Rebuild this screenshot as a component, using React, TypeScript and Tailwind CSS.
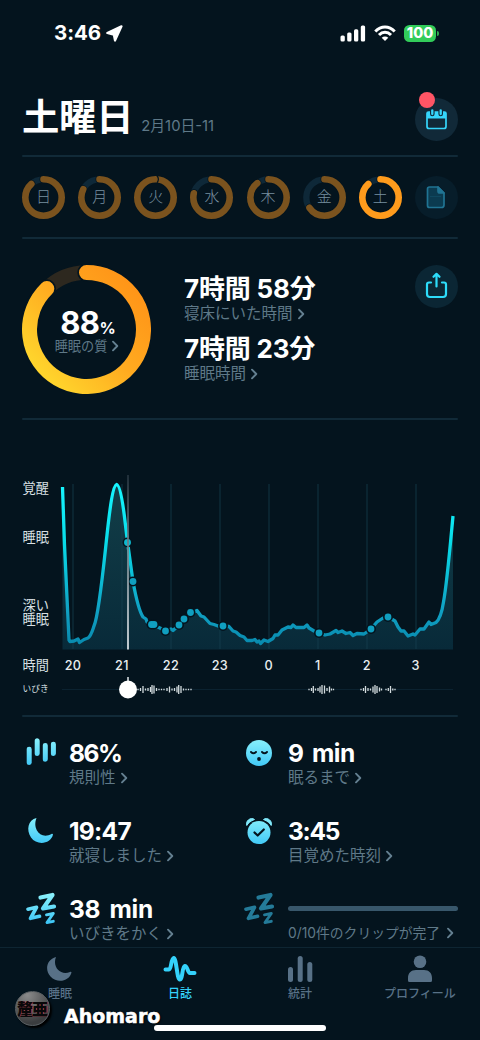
import type { ReactNode } from "react";

const DAYS = [
  { d: "日", deg: 316 },
  { d: "月", deg: 295 },
  { d: "火", deg: 359 },
  { d: "水", deg: 282 },
  { d: "木", deg: 320 },
  { d: "金", deg: 234 },
  { d: "土", deg: 316 },
];

const HOURS = ["20", "21", "22", "23", "0", "1", "2", "3"];

const CURVE =
  "M62.5 487L64.5 545L69 640L70 641.5L74 641L78 639L79.5 642.5L84 639.5L88 638C91 636 92 632 94 626C99 615 104 562 107 535C110 507 113 485.500 116.500 484.500C120 484.500 123 505 124.500 517L127.500 542L133 581.500C136 598 139 611 143 617L146 619L147 622L152 624.500L160 628L165.500 631L171 629L173 630.500L179 625L184 619L190.500 612.500L194 612L197 610.500L201 616L204 617L210 623.500L214 624.500L218 626L223 626L229 626.500L233 631L236 632L240 635.500L244 637L247 640.500L252 640.500L255 639.500L257 642L259 641L260.500 643.500L264 640L268 641.500L273 638.500L275 635L278 635L282 630L288 627L291 627.500L293 625L296 627.500L304 627.500L307 625L309 628L314 631L319 633L325 635L330 634L336 630.500L338 632.500L342 631L346 633.500L350 632.500L353 635.500L357 633.500L364 634L371 629L377 622L383 618L388 617L395 621L398 627L401 631L404 631L408 636L413 634L415 635L420 629L424 629L429 622L431 624.500L436 622.500C440 619 442 612 443.500 602C447 583 450 548 453 516";

const DOTS: [number, number][] = [
  [133, 581.5], [151.5, 624.5], [154, 624.5], [165.5, 631], [179, 625], [184, 619],
  [190.5, 612.5], [223, 626], [319, 633], [371, 629], [388, 617],
];

const WAVES: [number, number][] = [
  [138, 1.5], [140.5, 3], [143, 7], [145.500, 2], [148, 3], [150.500, 5], [152, 9], [154, 8], [156.500, 3],
  [159, 1.5], [161.500, 1.5], [164, 1.5], [167, 3], [169.500, 6], [172, 2], [174.500, 3], [177, 6], [178.700, 9], [181, 7],
  [183.500, 2], [186, 1.5], [188.500, 1.5], [191, 1.5],
  [309, 1.5], [311.500, 3], [313.300, 7], [315.500, 2], [318, 3], [320, 6], [322, 9], [324.500, 8], [327, 3], [329.500, 6], [331.500, 2], [333.500, 1.5],
  [361, 1.5], [363.500, 3], [365.500, 7], [368, 3], [370.500, 2], [373, 6], [375, 9], [377, 7], [379.500, 4], [381.500, 2],
  [386, 1.5], [388.300, 3], [390.500, 7], [392.800, 2], [395, 1.5],
];

function Chevron({ className = "" }: { className?: string }) {
  return (
    <svg width="8" height="12" viewBox="0 0 8 12" fill="none" stroke="#648091" strokeWidth="1.9" strokeLinecap="round" strokeLinejoin="round" className={"shrink-0 " + className}>
      <path d="M2 1.700L6.300 6L2 10.300" />
    </svg>
  );
}

function Divider() {
  return <div className="h-[2px] shrink-0 rounded-full bg-[#112a38]" />;
}

function DayRing({ d, deg, active }: { d: string; deg: number; active: boolean }) {
  const c = 2 * Math.PI * 18.2;
  return (
    <div className="grid size-[43px] place-items-center">
      <svg viewBox="0 0 43 43" className="col-start-1 row-start-1 size-[43px]" fill="none">
        <circle cx="21.5" cy="21.5" r="18.200" stroke="#0e2838" strokeWidth="6.300" />
        <g strokeLinecap="round" strokeDasharray={`${(c * deg) / 360} ${c}`} transform="rotate(-90 21.5 21.5)">
          <circle cx="21.5" cy="21.5" r="18.200" stroke="#04141e" strokeWidth="8" />
          <circle cx="21.5" cy="21.5" r="18.200" stroke={active ? "#ff9b1c" : "#7b531e"} strokeWidth="6.600" />
        </g>
        {deg > 350 && <path d="M23 -0.200Q25.800 3.200 23 6.800" stroke="#04141e" strokeWidth="1.200" />}
      </svg>
      <span className="z-10 col-start-1 row-start-1 -mt-[2px] text-[15px] leading-none font-light text-[#7890a0]">{d}</span>
    </div>
  );
}

function Zs({ fill }: { fill: string }) {
  return (
    <svg width="34" height="34" viewBox="0 0 34 34" fill="none" stroke={fill} strokeLinecap="round" strokeLinejoin="round">
      <path strokeWidth="4.200" d="M17.500 5.500L29.500 3L20 16.500L31 14.500" />
      <path strokeWidth="3.700" d="M5 17.200L13.500 15.300L7.500 26.300L16.500 24.300" />
      <path strokeWidth="2.900" d="M23.500 22.800L30.300 21.500L24 30.500L30.300 29.300" />
    </svg>
  );
}

function Stat({ icon, value, label, spacing }: { icon: ReactNode; value: string; label: string; spacing: string }) {
  return (
    <div className="flex h-[78px]">
      <div className="flex w-[47px] shrink-0">{icon}</div>
      <div className="flex flex-col whitespace-nowrap">
        <div className={"h-[27px] text-[24.5px] leading-[27px] font-bold text-white " + spacing}>{value}</div>
        <div className="flex h-[22px] items-center gap-[4px] text-[15.5px] leading-[22px] text-[#5f7988]">
          {label}
          <Chevron />
        </div>
      </div>
    </div>
  );
}

function Chart() {
  return (
    <svg width="480" height="244" viewBox="0 470 480 244" className="-ml-[22px] block">
      <defs>
        <linearGradient id="line" gradientUnits="userSpaceOnUse" x1="0" y1="484" x2="0" y2="645">
          <stop offset="0" stopColor="#17f5ff" />
          <stop offset="0.350" stopColor="#08ddea" />
          <stop offset="0.800" stopColor="#109fc2" />
          <stop offset="1" stopColor="#088aae" />
        </linearGradient>
        <linearGradient id="area" gradientUnits="userSpaceOnUse" x1="0" y1="484" x2="0" y2="650">
          <stop offset="0" stopColor="#123e48" />
          <stop offset="1" stopColor="#082a39" />
        </linearGradient>
        <linearGradient id="cursor" gradientUnits="userSpaceOnUse" x1="0" y1="475" x2="0" y2="650">
          <stop offset="0" stopColor="#24333e" />
          <stop offset="0.500" stopColor="#829199" />
          <stop offset="1" stopColor="#e3e9ec" />
        </linearGradient>
      </defs>
      <path d={CURVE + "L453 649.500H62.500Z"} fill="url(#area)" />
      <g stroke="#16404f" strokeOpacity="0.500" strokeWidth="1.500">
        {HOURS.map((h, i) => (
          <path key={h} d={`M${73 + i * 49} 484V649`} />
        ))}
      </g>
      <path d={CURVE} fill="none" stroke="url(#line)" strokeWidth="3.300" strokeLinejoin="round" />
      <circle cx="127.500" cy="542.500" r="4.200" fill="#0db8ce" stroke="#04141e" strokeWidth="1.500" />
      {DOTS.map(([x, y]) => (
        <circle key={x} cx={x} cy={y} r="5" fill="#04141e" />
      ))}
      {DOTS.map(([x, y]) => (
        <circle key={x} cx={x} cy={y} r="3.400" fill="#109fc0" />
      ))}
      <path d="M128 475V649.500" stroke="url(#cursor)" strokeWidth="1.700" />
      <g fill="#d9e0e4" fontSize="13.200">
        <text x="22.500" y="493">覚醒</text>
        <text x="22.500" y="542">睡眠</text>
        <text x="22.500" y="610">
          深い
          <tspan x="22.500" dy="13.700">睡眠</tspan>
        </text>
        <text x="22.500" y="669.500">時間</text>
        <text x="22.500" y="692" fontSize="8.700">いびき</text>
      </g>
      <g fill="#e9eef0" fontSize="12.700" fontWeight="500" textAnchor="middle" letterSpacing="0.300">
        {HOURS.map((h, i) => (
          <text key={h} x={73 + i * 48.950} y="669.500">{h}</text>
        ))}
      </g>
      <path d="M62 689.500H453" stroke="#0b2230" />
      <path d="M128 677V685" stroke="#e3e9ec" strokeWidth="1.500" />
      <circle cx="128" cy="689.500" r="9" fill="#fff" />
      <g stroke="#d4dcdf" strokeWidth="1.300">
        {WAVES.map(([x, h]) => (
          <path key={x} d={`M${x} ${689.500 - h / 2}v${h}`} />
        ))}
      </g>
    </svg>
  );
}

function BigRing() {
  return (
    <div className="grid size-[130px] place-items-center">
      <svg viewBox="0 0 130 130" className="col-start-1 row-start-1 size-[130px]" fill="none">
        <defs>
          <linearGradient id="gold" x1="0.800" y1="0" x2="0" y2="0.750">
            <stop offset="0" stopColor="#ff9518" />
            <stop offset="0.500" stopColor="#ffab20" />
            <stop offset="1" stopColor="#ffd42c" />
          </linearGradient>
        </defs>
        <circle cx="65.500" cy="65.500" r="57" stroke="#2d281f" strokeWidth="14.500" />
        <path d="M65.500 8.500A57 57 0 1 1 25.800 24.600" stroke="#04141e" strokeWidth="18.500" strokeLinecap="round" />
        <path d="M65.500 8.500A57 57 0 1 1 25.800 24.600" stroke="url(#gold)" strokeWidth="15" strokeLinecap="round" />
      </svg>
      <div className="z-10 col-start-1 row-start-1 flex flex-col items-center pt-[6px]">
        <div className="flex h-[28px] items-baseline pl-[4px] leading-[26px] font-bold text-white">
          <span className="text-[31px] tracking-[-0.600px]">88</span>
          <span className="text-[16px]">%</span>
        </div>
        <div className="flex h-[17px] items-center gap-[4px] pl-[2px] text-[13.2px] leading-[17px] whitespace-nowrap text-[#5f7988]">
          睡眠の質
          <Chevron />
        </div>
      </div>
    </div>
  );
}

function Duration({ h, m, label }: { h: string; m: string; label: string }) {
  return (
    <div className="h-[60px] whitespace-nowrap">
      <div className="h-[30px] text-[26px] leading-[30px] font-bold tracking-[-0.200px] text-white">
        {h}時間 {m}分
      </div>
      <div className="flex h-[20px] items-center gap-[4px] text-[15.5px] leading-[20px] text-[#5f7988]">
        {label}
        <Chevron />
      </div>
    </div>
  );
}

function Tab({ label, active, children }: { label: string; active?: boolean; children: ReactNode }) {
  return (
    <div className={"flex flex-1 flex-col items-center pt-[5px] " + (active ? "text-[#34d2fb]" : "text-[#587187]")}>
      <svg width="36" height="30" viewBox="0 0 36 30" fill="currentColor">{children}</svg>
      <span className="mt-[2px] text-[12px] leading-[18px] font-medium whitespace-nowrap">{label}</span>
    </div>
  );
}

export default function App() {
  return (
    <main className="relative h-[1040px] w-[480px] overflow-hidden bg-[#04141e] font-[Inter,'Noto_Sans_CJK_JP',sans-serif]">
      <svg className="absolute size-0">
        <defs>
          <linearGradient id="ice" gradientUnits="userSpaceOnUse" x1="0" y1="2" x2="0" y2="31">
            <stop offset="0" stopColor="#8af1fc" />
            <stop offset="1" stopColor="#3dc6f6" />
          </linearGradient>
        </defs>
      </svg>

      <div className="flex h-[66px] items-center justify-between pr-[41px] pl-[54px]">
        <div className="flex items-center gap-[5px] text-[20.5px] font-bold tracking-[-0.100px] text-white">
          3:46
          <svg width="17" height="17" viewBox="0 0 17 17" fill="#fff" stroke="#fff" strokeWidth="2.200" strokeLinejoin="round">
            <path d="M1.300 8L15.500 1.300L9 15.500L7.800 9.600Z" />
          </svg>
        </div>
        <div className="flex items-center">
          <svg width="26" height="17" viewBox="0 0 26 17" fill="#fff">
            <rect x="0.500" y="10.500" width="4.300" height="6" rx="1.500" />
            <rect x="7.200" y="7.500" width="4.300" height="9" rx="1.500" />
            <rect x="14" y="4.300" width="4.300" height="12.200" rx="1.500" />
            <rect x="20.800" y="0.500" width="4.300" height="16" rx="1.500" />
          </svg>
          <svg width="22" height="17" viewBox="0 0 22 17" fill="none" stroke="#fff" strokeWidth="3" className="ml-[8px]">
            <path d="M1.300 6.500C7 0.500 15 0.500 20.700 6.500" />
            <path d="M5 10C8.500 6.400 13.500 6.400 17 10" />
            <path d="M7.700 12.700C9.500 11 12.500 11 14.300 12.700L11 16Z" fill="#fff" stroke="none" />
          </svg>
          <div className="ml-[8px] flex h-[17px] w-[32px] items-center justify-center rounded-[5.500px] bg-[#32cc5a] text-[14.500px] font-extrabold text-white">100</div>
          <div className="ml-[1px] h-[5px] w-[2px] rounded-r-full bg-[#32a850]" />
        </div>
      </div>

      <div className="flex flex-col px-[22px]">
        <header className="flex h-[89px] justify-between">
          <div className="flex items-baseline pt-[25px]">
            <h1 className="text-[37.300px] leading-[54px] font-bold tracking-[-0.200px] text-white">土曜日</h1>
            <span className="ml-[8px] text-[14.800px] text-[#5f7988]">2月10日-11</span>
          </div>
          <div className="relative mt-[32px] grid size-[43px] place-items-center rounded-full bg-[#112938]">
            <svg width="23" height="23" viewBox="0 0 23 23" fill="none">
              <path d="M3.500 4H19.500Q21 4 21 5.500V18.500Q21 20.500 19 20.500H4Q2 20.500 2 18.500V5.500Q2 4 3.500 4Z" stroke="#35d5fb" strokeWidth="1.700" />
              <path d="M2 4H21V10.500H2Z" fill="#35d5fb" />
              <path d="M7.300 2V6M15.700 2V6" stroke="#112938" strokeWidth="4.600" strokeLinecap="round" />
              <path d="M7.300 2.300V6M15.700 2.300V6" stroke="#35d5fb" strokeWidth="2.300" strokeLinecap="round" />
            </svg>
            <span className="absolute -top-[6px] left-[4px] size-[16px] rounded-full bg-[#ff5565]" />
          </div>
        </header>
        <Divider />

        <div className="flex h-[80px] items-center justify-between">
          {DAYS.map((x) => (
            <DayRing key={x.d} d={x.d} deg={x.deg} active={x.d === "土"} />
          ))}
          <div className="grid size-[43px] place-items-center rounded-full bg-[#071d2a]">
            <svg width="20" height="24" viewBox="0 0 20 24" fill="#0b3b50" stroke="#207493" strokeWidth="1.700" strokeLinejoin="round">
              <path d="M3.500 2H12L18 8V20Q18 22.500 15.500 22.500H3.500Q1.500 22.500 1.500 20.500V4Q1.500 2 3.500 2Z" />
              <path d="M12 2V6Q12 8 14 8H18Z" fill="#207493" />
              <path d="M4.500 11.500H15" strokeWidth="0.800" strokeDasharray="1 1" opacity="0.600" />
            </svg>
          </div>
        </div>
        <Divider />

        <section className="flex h-[179px] items-start">
          <div className="-ml-[1px] mt-[25px]"><BigRing /></div>
          <div className="mt-[35px] ml-[33px]">
            <Duration h="7" m="58" label="寝床にいた時間" />
            <Duration h="7" m="23" label="睡眠時間" />
          </div>
          <div className="mt-[26px] ml-auto grid size-[43px] place-items-center rounded-full bg-[#0b2634]">
            <svg width="23" height="28" viewBox="0 0 23 28" fill="none" stroke="#2ddcfa" strokeWidth="2.200" strokeLinecap="round" strokeLinejoin="round" className="-mt-[2px]">
              <path d="M6 10.500H4Q2 10.500 2 12.500V22Q2 25 5 25H18Q21 25 21 22V12.500Q21 10.500 19 10.500H17" />
              <path d="M11.500 14.500V2.500M8.500 4.800L11.500 1.800L14.500 4.800" />
            </svg>
          </div>
        </section>
        <Divider />

        <div className="h-[295px] pt-[50px]"><Chart /></div>
        <Divider />

        <section className="grid grid-cols-[219px_217px] pt-[23px]">
          <Stat value="86%" label="規則性" spacing="tracking-[-1.400px]" icon={
            <svg width="34" height="34" viewBox="0 0 34 34" stroke="url(#ice)" strokeWidth="5" strokeLinecap="round" className="-mt-[4px] ml-[2px]">
              <path d="M5.200 13.200L5.210 26.500M13.200 4.800L13.210 17.500M21.300 9.500L21.310 23.200M29.400 8.200L29.410 17.500" />
            </svg>
          } />
          <Stat value="9 min" label="眠るまで" spacing="tracking-[-0.400px] [word-spacing:3px]" icon={
            <svg width="34" height="34" viewBox="0 0 34 34" className="-mt-[3px] ml-[1px]">
              <circle cx="17" cy="16" r="13" fill="url(#ice)" />
              <path d="M9 15Q11.500 17.500 14 15M20 15Q22.500 17.500 25 15" fill="none" stroke="#04141e" strokeWidth="1.900" strokeLinecap="round" />
              <circle cx="17" cy="22" r="1.900" fill="#04141e" />
            </svg>
          } />
          <Stat value="19:47" label="就寝しました" spacing="tracking-[-0.700px]" icon={
            <svg width="34" height="34" viewBox="0 0 34 34" fill="url(#ice)" className="-mt-[4px] ml-[2px]">
              <path d="M12.500 4C4 6 2 16 7 23.500C13 32 27 30 29 20.500C29 19.800 28 19.700 27.500 20C17 26 8 15 12.500 4Z" />
            </svg>
          } />
          <Stat value="3:45" label="目覚めた時刻" spacing="tracking-[-1.300px]" icon={
            <svg width="34" height="34" viewBox="0 0 34 34" className="-mt-[3px] ml-[1px]">
              <circle cx="17" cy="17.500" r="11.500" fill="url(#ice)" />
              <path d="M4.800 10.500C3 6 9 1.500 12.500 4.500C8.500 6 6.300 8 4.800 10.500ZM29.200 10.500C31 6 25 1.500 21.500 4.500C25.500 6 27.700 8 29.200 10.500Z" fill="#80e8fa" stroke="#80e8fa" strokeLinejoin="round" />
              <path d="M12.500 17.500L15.700 20.500L21.800 14.500" fill="none" stroke="#04141e" strokeWidth="2.200" strokeLinecap="round" strokeLinejoin="round" />
            </svg>
          } />
          <Stat value="38 min" label="いびきをかく" spacing="tracking-[-0.200px] [word-spacing:3.500px]" icon={<div className="-mt-[4px] ml-[1px]"><Zs fill="url(#ice)" /></div>} />
          <div className="flex h-[78px]">
            <div className="-mt-[4px] w-[47px]"><Zs fill="#247b99" /></div>
            <div className="flex w-[170px] flex-col pt-[10px]">
              <div className="h-[5px] rounded-full bg-[#38576b]" />
              <div className="mt-[11px] flex h-[22px] items-center justify-between text-[13.800px] leading-[22px] whitespace-nowrap text-[#5f7988]">
                0/10件のクリップが完了
                <Chevron className="mr-[4px]" />
              </div>
            </div>
          </div>
        </section>
      </div>

      <nav className="absolute inset-x-0 bottom-0 flex h-[93px] border-t border-[#0e2532] bg-[#04141e]">
        <Tab label="睡眠">
          <path d="M14 4C4.500 6.500 2.500 17 8.500 23.500C15.500 31 27.500 28 29.500 19.500C29.500 18.800 28.500 18.500 28 19C18.500 23 10 14 14 4Z" />
        </Tab>
        <Tab label="日誌" active>
          <path d="M3.500 16.500H7C9.500 16.500 8.800 5.500 11.800 5C14.500 5 14.800 26.500 17.800 26.500C20.800 26.500 20 13.500 22.800 13C25.500 12.500 25.500 19.800 28 20H32.500" fill="none" stroke="currentColor" strokeWidth="4" strokeLinecap="round" strokeLinejoin="round" />
        </Tab>
        <Tab label="統計">
          <rect x="6" y="14" width="5" height="15" rx="2.500" />
          <rect x="15.700" y="3" width="5" height="26" rx="2.500" />
          <rect x="25.300" y="9" width="5" height="20" rx="2.500" />
        </Tab>
        <Tab label="プロフィール">
          <circle cx="18" cy="8.700" r="6.300" />
          <path d="M6 29V25C6 20 9 17 14 17H22C27 17 30 20 30 25V27.500Q30 29 28.500 29H7.500Q6 29 6 27.500Z" />
        </Tab>
      </nav>

      <div className="absolute top-[1025px] left-[154px] h-[6px] w-[172px] rounded-full bg-white" />
      <div className="absolute top-[990px] left-[15px] flex items-center">
        <div className="flex size-[35px] items-center justify-center overflow-hidden rounded-full border border-[#5b6063] bg-[radial-gradient(circle_at_35%_10%,#8a8a8a,#3b3d3f_75%)] text-[16px] leading-none font-black text-[#08080a] shadow-[2px_2px_2px_#000] [text-shadow:0.800px_0_0_#b32b3a]">
          <span className="-mr-[1px]">釐</span>
          <span>亜</span>
        </div>
        <span className="mt-[15px] ml-[14px] font-['DejaVu_Sans'] text-[19px] leading-[22px] font-bold text-white [-webkit-text-stroke:0.500px_white] [text-shadow:1px_1px_2px_#000]">Ahomaro</span>
      </div>
    </main>
  );
}
